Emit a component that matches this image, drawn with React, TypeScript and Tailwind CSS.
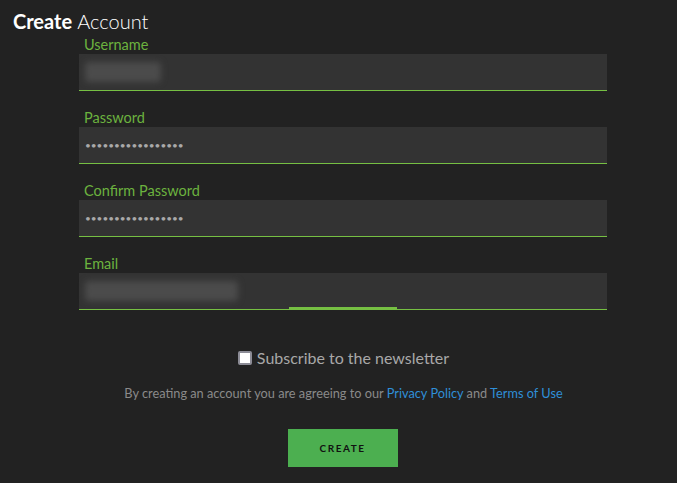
import React from 'react';

type FieldProps = {
  label: string;
  children?: React.ReactNode;
  focused?: boolean;
};

function Field({ label, children, focused = false }: FieldProps) {
  return (
    <div className="flex flex-col">
      <label className="pl-[5px] text-[14.5px] leading-[18px] text-[#6cb33f]">{label}</label>
      <div className="relative h-[37px] bg-[#333333] border-b border-[#76c043] flex items-center px-[6px]">
        {children}
        {focused && <div className="absolute left-[210px] bottom-[-1px] w-[108px] h-[3px] bg-[#76c043]" />}
      </div>
    </div>
  );
}

const Blurred = ({ width }: { width: number }) => (
  <div className="h-[20px] rounded-sm bg-[#4b4b4b] blur-[3px]" style={{ width }} />
);

const Dots = () => <span className="text-[10px] text-[#a9a9a9]">•••••••••••••••••</span>;

export default function App() {
  return (
    <div className="w-[677px] h-[483px] bg-[#222222] font-['Lato','Open_Sans',sans-serif] overflow-hidden">
      <h1 className="pl-[13px] pt-[9px] text-[20px] leading-[24px] text-white">
        <span className="font-bold">Create</span> <span className="font-light">Account</span>
      </h1>

      <div className="ml-[79px] w-[528px] mt-[3px] flex flex-col gap-[18px]">
        <Field label="Username">
          <Blurred width={76} />
        </Field>
        <Field label="Password">
          <Dots />
        </Field>
        <Field label="Confirm Password">
          <Dots />
        </Field>
        <Field label="Email" focused>
          <Blurred width={153} />
        </Field>
      </div>

      <div className="mt-[36px] flex items-center justify-center gap-[5px] ml-[10px]">
        <span className="w-[14px] h-[14px] bg-white border-2 border-[#8c8c96] rounded-[2px]" />
        <span className="text-[16px] leading-[24px] text-[#a8a8a8]">Subscribe to the newsletter</span>
      </div>

      <p className="mt-[14px] text-center ml-[10px] text-[12.75px] leading-[18px] text-[#8a8a8a]">
        By creating an account you are agreeing to our <a className="text-[#2f8fd8]">Privacy Policy</a> and{' '}
        <a className="text-[#2f8fd8]">Terms of Use</a>
      </p>

      <div className="mt-[27px] flex justify-center ml-[8px]">
        <button className="w-[110px] h-[38px] bg-[#4caf50] text-[#111] text-[10px] font-bold tracking-[1.5px]">
          CREATE
        </button>
      </div>
    </div>
  );
}
